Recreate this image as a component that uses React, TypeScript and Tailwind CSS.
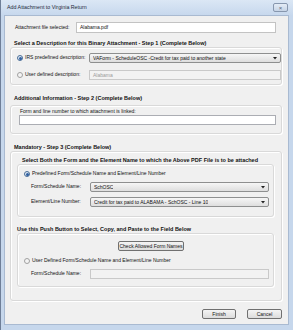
import React from "react";

const Radio = ({ checked }: { checked?: boolean }) => (
  <div
    className={
      "w-[6px] h-[6px] rounded-full border flex items-center justify-center shrink-0 " +
      (checked ? "border-[#4a6d96] bg-[#dfe9f5]" : "border-[#a0a0a0] bg-[#f4f4f4]")
    }
  >
    {checked && <div className="w-[3px] h-[3px] rounded-full bg-[#2f5fa0]" />}
  </div>
);

const Arrow = () => (
  <svg width="4" height="3" viewBox="0 0 4 3" className="shrink-0">
    <path d="M0 0 L4 0 L2 2.5 Z" fill="#222" />
  </svg>
);

const Select = ({ value, className }: { value: string; className: string }) => (
  <div
    className={
      "h-[10px] flex items-center justify-between pl-[3px] pr-[3px] border border-[#8e8f8f] rounded-[2px] bg-gradient-to-b from-[#f6f6f6] to-[#dedede] text-[#111] " +
      className
    }
  >
    <span className="truncate leading-none">{value}</span>
    <Arrow />
  </div>
);

const Field = ({ value, className, disabled }: { value?: string; className: string; disabled?: boolean }) => (
  <div
    className={
      "h-[10px] flex items-center pl-[3px] border " +
      (disabled ? "border-[#c9c9c9] bg-[#f2f2f2] text-[#9b9b9b] " : "border-[#abadb3] bg-white text-[#111] ") +
      className
    }
  >
    <span className="leading-none">{value}</span>
  </div>
);

const Btn = ({ children, className }: { children: React.ReactNode; className: string }) => (
  <div
    className={
      "h-[10px] flex items-center justify-center border border-[#707070] rounded-[2px] bg-gradient-to-b from-[#f4f4f4] to-[#dcdcdc] text-[#111] " +
      className
    }
  >
    <span className="leading-none">{children}</span>
  </div>
);

const Title = ({ children, className }: { children: React.ReactNode; className: string }) => (
  <div className={"font-bold text-[5.5px] leading-[8px] text-[#111] whitespace-nowrap " + className}>{children}</div>
);

const Box = ({ children, className }: { children: React.ReactNode; className: string }) => (
  <div
    className={
      "border border-[#d9d9d9] rounded-[3px] shadow-[inset_1px_1px_0_#ffffff,1px_1px_0_#ffffff] " + className
    }
  >
    {children}
  </div>
);

export default function App() {
  return (
    <div className="w-[293px] h-[330px] flex flex-col bg-[#c6d7ec] border-l border-l-[#6f7f98] font-['Liberation_Sans',Arial,sans-serif] text-[5px]">
      <div className="h-[15px] flex items-center justify-between pl-[6px] pr-[5px] bg-gradient-to-b from-[#dbe7f5] to-[#c7d8ed]">
        <span className="text-[5.3px] text-[#1e2a3a] leading-none">Add Attachment to Virginia Return</span>
        <div className="w-[15px] h-[9px] rounded-[2px] border border-[#8797ae] bg-gradient-to-b from-[#e4ecf6] to-[#c6d4e6] flex items-center justify-center text-[6px] text-[#5a6678] leading-none">
          ×
        </div>
      </div>
      <div className="flex-1 mr-[4px] mb-[5px] ml-[3px] bg-[#f0f0f0] border border-[#a9bad1] flex flex-col text-[#111]">
        <div className="mt-[6px] h-[11px] flex items-center">
          <span className="ml-[10px] w-[61px]">Attachment file selected:</span>
          <Field value="Alabama.pdf" className="h-[11px] w-[200px] bg-[#f4f4f4] border-[#c3c3c3]" />
        </div>

        <Title className="mt-[6px] ml-[9px]">Select a Description for this Binary Attachment - Step 1 (Complete Below)</Title>
        <Box className="mx-[5px] mr-[6px] pt-[5px] pb-[4px] flex flex-col gap-[7px]">
          <div className="h-[10px] flex items-center">
            <div className="ml-[6px]"><Radio checked /></div>
            <span className="ml-[2px] w-[64px]">IRS predefined description:</span>
            <Select value="VAForm - ScheduleOSC -Credit for tax paid to another state" className="w-[192px]" />
          </div>
          <div className="h-[10px] flex items-center">
            <div className="ml-[6px]"><Radio /></div>
            <span className="ml-[2px] w-[64px]">User defined description:</span>
            <Field value="Alabama" disabled className="w-[192px]" />
          </div>
        </Box>

        <Title className="mt-[9px] ml-[9px]">Additional Information - Step 2 (Complete Below)</Title>
        <Box className="mx-[5px] mr-[6px] mt-[3px] pt-[1px] pb-[8px] flex flex-col">
          <span className="ml-[9px] leading-[8px]">Form and line number to which attachment is linked:</span>
          <Field className="ml-[8px] w-[257px]" />
        </Box>

        <Title className="mt-[9px] ml-[9px]">Mandatory - Step 3 (Complete Below)</Title>
        <Box className="mx-[5px] mr-[6px] pt-[4px] pb-[13px] flex flex-col">
          <Title className="ml-[11px]">Select Both the Form and the Element Name to which the Above PDF File is to be attached</Title>
          <Box className="ml-[6px] mr-[7px] pt-[5px] pb-[9px] flex flex-col">
            <div className="h-[8px] flex items-center">
              <div className="ml-[6px]"><Radio checked /></div>
              <span className="ml-[2px]">Predefined Form/Schedule Name and Element/Line Number</span>
            </div>
            <div className="mt-[4px] h-[10px] flex items-center">
              <span className="ml-[13px] w-[59px]">Form/Schedule Name:</span>
              <Select value="SchOSC" className="w-[179px]" />
            </div>
            <div className="mt-[5px] h-[10px] flex items-center">
              <span className="ml-[13px] w-[59px]">Element/Line Number:</span>
              <Select value="Credit for tax paid to ALABAMA - SchOSC - Line 10" className="w-[179px]" />
            </div>
          </Box>
          <Title className="mt-[8px] ml-[6px]">Use this Push Button to Select, Copy, and Paste to the Field Below</Title>
          <Box className="ml-[6px] mr-[7px] pt-[7px] pb-[7px] flex flex-col">
            <div className="flex">
              <Btn className="ml-[100px] w-[66px]">Check Allowed Form Names</Btn>
            </div>
            <div className="mt-[6px] h-[8px] flex items-center">
              <div className="ml-[6px]"><Radio /></div>
              <span className="ml-[2px]">User Defined Form/Schedule Name and Element/Line Number</span>
            </div>
            <div className="mt-[4px] h-[10px] flex items-center">
              <span className="ml-[13px] w-[59px]">Form/Schedule Name:</span>
              <Field disabled className="w-[179px]" />
            </div>
          </Box>
        </Box>

        <div className="mt-[8px] flex justify-end gap-[11px] mr-[6px]">
          <Btn className="w-[34px]">Finish</Btn>
          <Btn className="w-[35px]">Cancel</Btn>
        </div>
      </div>
    </div>
  );
}
